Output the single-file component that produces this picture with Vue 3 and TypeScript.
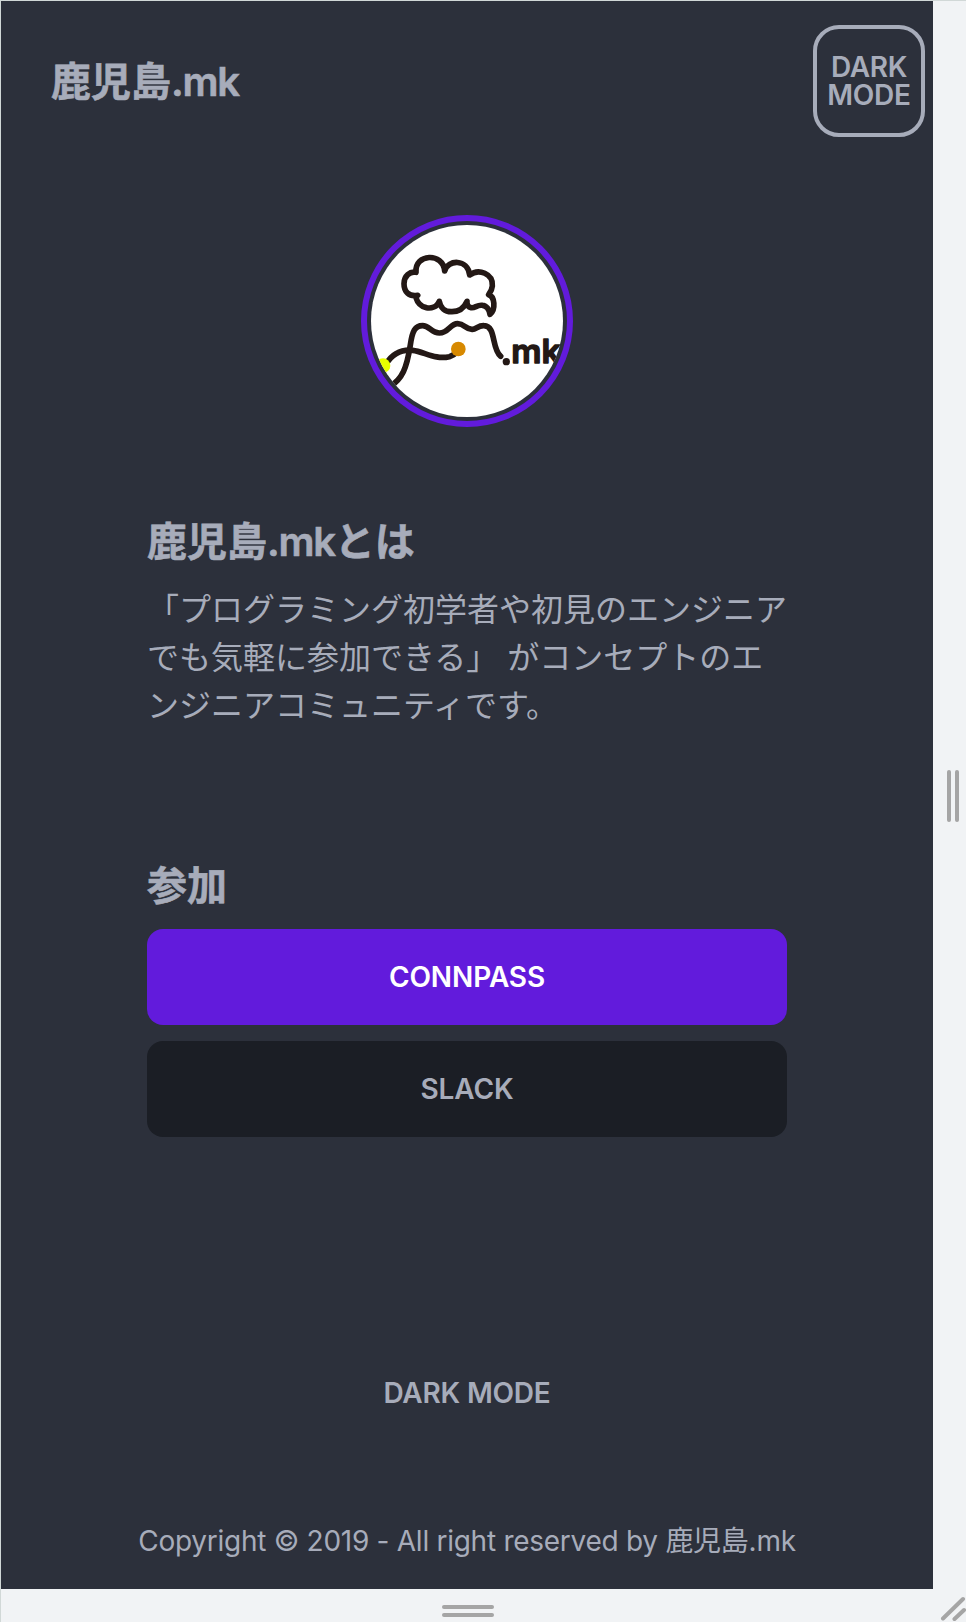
<script setup lang="ts">
interface JoinLink {
  label: string
  kind: 'primary' | 'neutral'
}

const siteName = '鹿児島.mk'
const joinLinks: JoinLink[] = [
  { label: 'CONNPASS', kind: 'primary' },
  { label: 'SLACK', kind: 'neutral' },
]
</script>

<template>
  <div class="frame">
    <div class="page">
      <header class="header">
        <h1 class="brand">鹿児島<span class="mk">.mk</span></h1>
        <button class="mode" type="button">DARK<br />MODE</button>
      </header>

      <div class="avatar">
        <svg viewBox="63 60 576 576" fill="none" stroke="#231815" stroke-width="17" stroke-linecap="round" stroke-linejoin="round" role="img" :aria-label="siteName">
          <path d="M198 202C193 146 279 141 284 198C293 163 353 161 359 210C386 189 430 206 427 243C426 256 419 265 416 269C434 274 438 313 420 328C418 314 409 301 397 301C382 298 374 311 363 308C356 307 350 301 351 289C344 305 330 320 306 320C285 321 271 308 268 289C261 306 244 311 229 308C211 305 201 289 197 276L203 271C177 276 162 260 162 236C162 213 180 198 198 202Z" />
          <path d="M119 545C157 522 170 490 181 420C187 378 195 362 218 362C238 362 244 384 268 384C297 384 299 356 323 356C345 356 345 374 367 373C379 372 385 361 402 362C439 363 424 432 452 454" />
          <path d="M108 478C126 447 152 433 188 436C222 440 256 465 298 455Q312 451 323 439" />
          <circle cx="99" cy="482" r="22" fill="#e8ff00" stroke="none" />
          <circle cx="325" cy="432" r="22" fill="#d78900" stroke="none" />
          <circle cx="469" cy="470" r="11" fill="#231815" stroke="none" />
          <text class="logo-text" x="484" y="474" textLength="148" lengthAdjust="spacingAndGlyphs">mk</text>
        </svg>
      </div>

      <main class="content">
        <section class="about">
          <h2>鹿児島<span class="mk">.mk</span>とは</h2>
          <p>「プログラミング初学者や初見のエンジニアでも気軽に参加できる」 がコンセプトのエンジニアコミュニティです。</p>
        </section>
        <section class="join">
          <h2>参加</h2>
          <a v-for="link in joinLinks" :key="link.label" class="btn" :class="link.kind">{{ link.label }}</a>
        </section>
      </main>

      <footer class="footer">
        <span class="toggle">DARK MODE</span>
        <p class="copyright">Copyright © 2019 - All right reserved by 鹿児島.mk</p>
      </footer>
    </div>
    <div class="grip grip-right"><i></i><i></i></div>
    <div class="grip grip-bottom"><i></i><i></i></div>
    <svg class="corner" viewBox="0 0 33 33" stroke="#a5a5a5" stroke-width="4" stroke-linecap="round">
      <path d="M10 29.5L30 10M21.5 30L31 21" />
    </svg>
  </div>
</template>

<style>
body {
  margin: 0;
  background: #f1f3f5;
}
</style>

<style scoped>
.frame {
  box-sizing: border-box;
  width: 966px;
  height: 1622px;
  display: grid;
  grid-template: 1588px 33px / 932px 33px;
  border-top: 1px solid #d1d8d7;
  border-left: 1px solid #d1d8d7;
  background: #f1f3f5;
  overflow: hidden;
}
.page {
  display: flex;
  flex-direction: column;
  align-items: center;
  background: #2c303b;
  color: #a7acba;
  font-family: Inter, "Noto Sans CJK JP", sans-serif;
}
h1, h2, p {
  margin: 0;
}
.header {
  box-sizing: border-box;
  width: 100%;
  height: 160px;
  padding: 0 8px 0 50px;
  display: flex;
  align-items: center;
  justify-content: space-between;
}
.brand, h2 {
  font-size: 40px;
  line-height: 56px;
  font-weight: 700;
  -webkit-text-stroke: 0.6px currentColor;
}
.brand {
  padding-top: 2px;
}
.mk {
  font-weight: 600;
  letter-spacing: -1.3px;
}
.mode {
  box-sizing: border-box;
  width: 112px;
  height: 112px;
  padding: 0;
  border: 4px solid #a7acba;
  border-radius: 26px;
  background: none;
  color: inherit;
  font: 600 28px/28px Inter, sans-serif;
  letter-spacing: -0.3px;
  text-align: center;
}
.avatar {
  box-sizing: border-box;
  width: 212px;
  height: 212px;
  margin-top: 54px;
  padding: 4px;
  border: 6px solid #621bdc;
  border-radius: 50%;
}
.avatar svg {
  display: block;
  width: 192px;
  height: 192px;
  border-radius: 50%;
  background: #fff;
}
.logo-text {
  font: 600 96px Inter, sans-serif;
  fill: #231815;
  stroke-width: 4;
}
.content {
  width: 640px;
  margin-top: 87px;
}
.about p {
  margin-top: 16px;
  font-size: 32px;
  line-height: 48px;
  line-break: anywhere;
}
.join {
  display: flex;
  flex-direction: column;
  margin-top: 128px;
}
.join h2 {
  margin-bottom: 15px;
}
.btn {
  height: 96px;
  display: flex;
  align-items: center;
  justify-content: center;
  border-radius: 16px;
  font-size: 28px;
  font-weight: 600;
  letter-spacing: -0.1px;
}
.btn + .btn {
  margin-top: 16px;
}
.primary {
  background: #621bdc;
  color: #fff;
}
.neutral {
  background: #1b1e25;
}
.footer {
  flex: 1;
  display: flex;
  flex-direction: column;
  align-items: center;
  justify-content: flex-end;
}
.toggle {
  font-size: 28px;
  line-height: 40px;
  font-weight: 600;
  letter-spacing: -0.2px;
}
.copyright {
  margin: 108px 0 28px;
  font-size: 28px;
  line-height: 40px;
  letter-spacing: -0.27px;
  white-space: nowrap;
}
.grip {
  display: flex;
  align-items: center;
  justify-content: center;
  gap: 4px;
}
.grip i {
  border-radius: 2px;
  background: #a5a5a5;
}
.grip-right {
  padding: 2px 0 0 7px;
}
.grip-right i {
  width: 4px;
  height: 52px;
}
.grip-bottom {
  flex-direction: column;
  padding: 11px 0 0 2px;
}
.grip-bottom i {
  width: 52px;
  height: 4px;
}
.corner {
  width: 33px;
  height: 33px;
}
</style>
